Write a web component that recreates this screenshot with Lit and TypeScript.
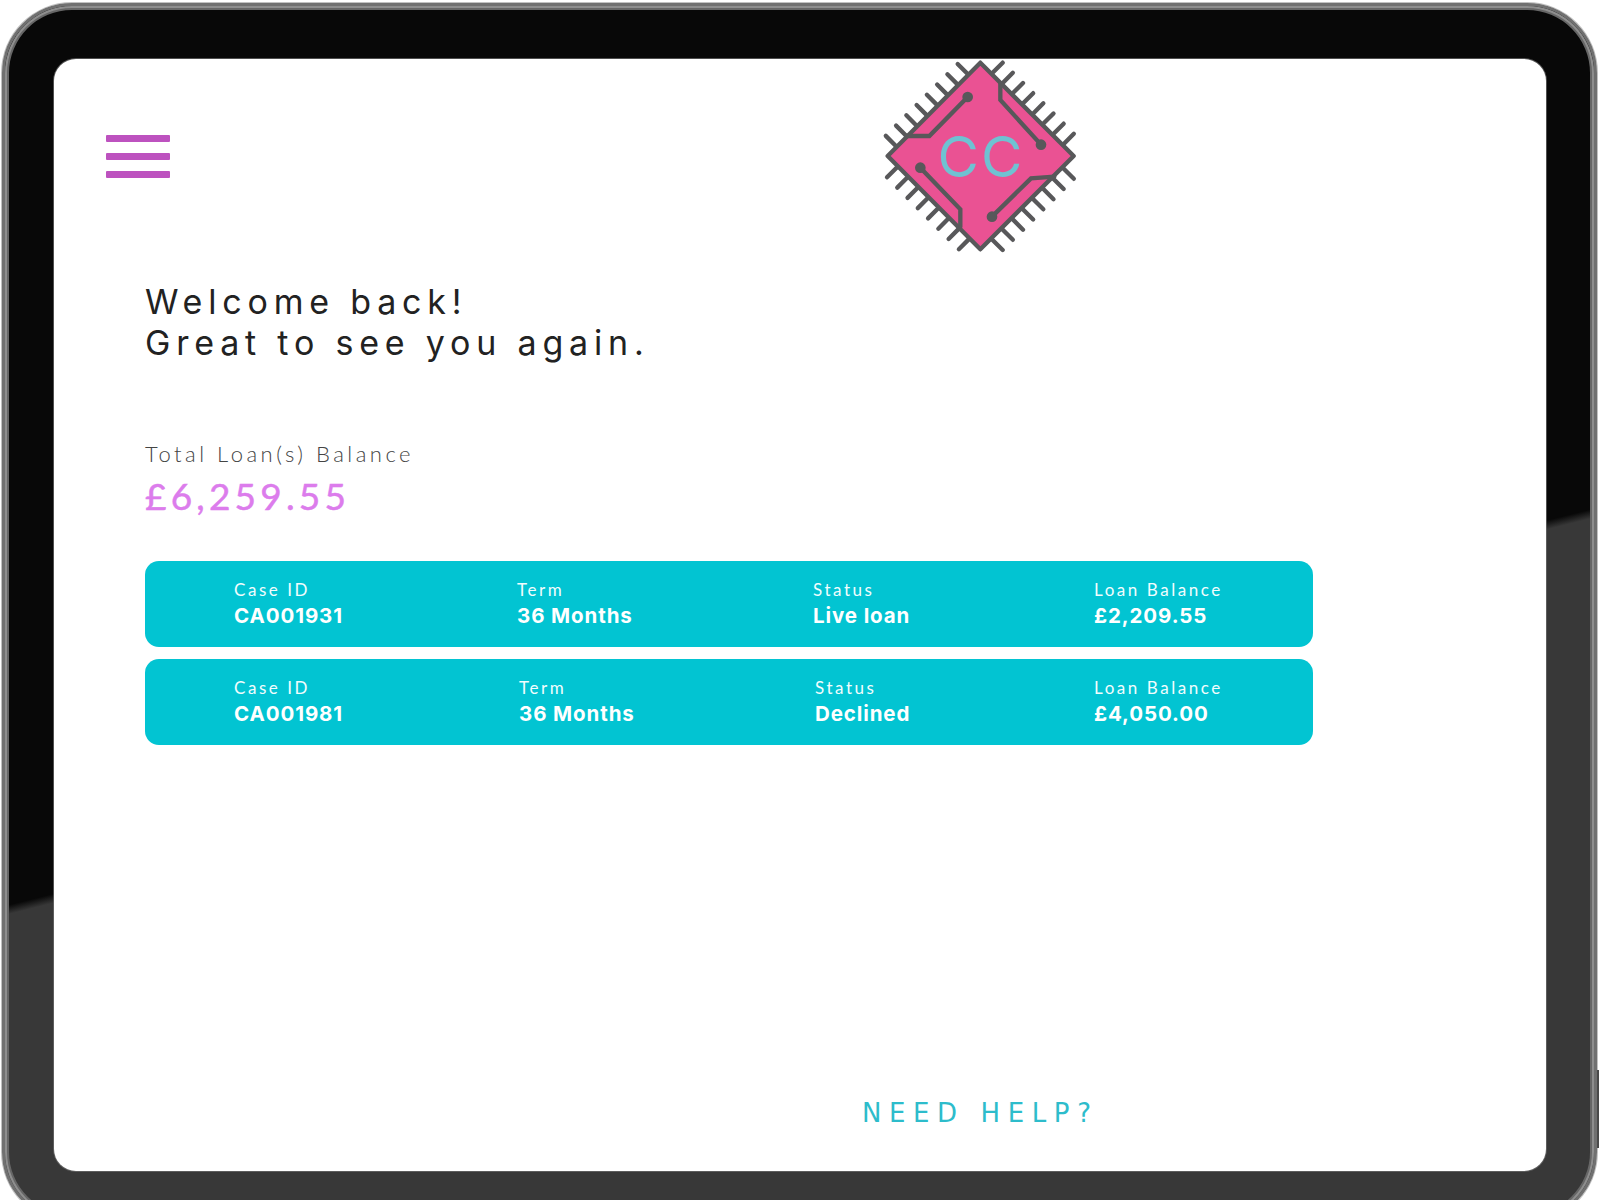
import { LitElement, html, css, svg } from "lit";
import { customElement } from "lit/decorators.js";

type Cell = { label: string; value: string };
const rows: { alt: boolean; cells: Cell[] }[] = [
  { alt: false, cells: [
    { label: "Case ID", value: "CA001931" },
    { label: "Term", value: "36 Months" },
    { label: "Status", value: "Live loan" },
    { label: "Loan Balance", value: "£2,209.55" },
  ]},
  { alt: true, cells: [
    { label: "Case ID", value: "CA001981" },
    { label: "Term", value: "36 Months" },
    { label: "Status", value: "Declined" },
    { label: "Loan Balance", value: "£4,050.00" },
  ]},
];

// pin outer ends and their inward direction, in logo coordinates
const pinSets: [number, number, number, number, number, number][] = [
  [290, 42, -30.8, 30.8, 34, 34],
  [425, 38, 30.5, 30.5, -34, 34],
  [78, 382, 30.8, 30.8, 34, -34],
  [425, 600, 30.5, -30.5, -34, -34],
];

@customElement("app-root")
export class AppRoot extends LitElement {
  static styles = css`
    :host {
      display: block;
      height: 1200px;
      overflow: hidden;
      background: #fff;
      position: relative;
    }
    .device {
      box-sizing: border-box;
      width: 1595px;
      height: 1219px;
      margin: 3px 0 0 2px;
      padding: 53px 48px 48px 49px;
      border: 3px solid #707070;
      border-radius: 70px;
      background: linear-gradient(165.96deg, #080808 873px, #383838 882px);
      box-shadow: inset 0 0 0 2px #8e8e8e, inset 0 0 0 4px #666, 0 0 0 1px rgba(100, 100, 100, 0.4);
    }
    .volume {
      position: absolute;
      left: 1597px;
      top: 1070px;
      width: 2px;
      height: 78px;
      background: #4a4a4a;
    }
    .screen {
      box-sizing: border-box;
      width: 1492px;
      height: 1112px;
      background: #fff;
      border-radius: 22px;
      box-shadow: 0 0 0 1px rgba(110, 110, 110, 0.7);
      display: flex;
      flex-direction: column;
    }
    .header {
      display: flex;
      align-items: flex-start;
      gap: 711px;
      padding: 1px 0 0 52px;
    }
    .burger {
      display: flex;
      flex-direction: column;
      gap: 11px;
      width: 64px;
      margin-top: 75px;
    }
    .burger span {
      display: block;
      height: 7px;
      background: #bd52bf;
      border-radius: 1px;
    }
    .logo {
      display: block;
      width: 200px;
      height: 193.33px;
    }
    .logo-text {
      font-family: Inter, "Liberation Sans", sans-serif;
      font-weight: 400;
      font-size: 170px;
      letter-spacing: 6px;
      fill: #6fc2d2;
    }
    .content {
      padding-left: 91px;
      flex: 1;
      display: flex;
      flex-direction: column;
    }
    h1 {
      margin: 28px 0 0;
      font-family: Inter, sans-serif;
      font-weight: 400;
      font-size: 34px;
      line-height: 41px;
      letter-spacing: 5.8px;
      color: #222;
    }
    .total-label {
      margin-top: 78px;
      font-family: Lato, sans-serif;
      font-weight: 300;
      font-size: 22px;
      line-height: 26px;
      letter-spacing: 3.5px;
      color: #444;
    }
    .total {
      margin-top: 7px;
      font-family: Lato, sans-serif;
      font-weight: 400;
      font-size: 37px;
      line-height: 44px;
      letter-spacing: 4.2px;
      color: #dc7cec;
      -webkit-text-stroke: 0.5px #dc7cec;
    }
    .cards {
      margin-top: 43px;
      width: 1168px;
      display: flex;
      flex-direction: column;
      gap: 12px;
    }
    .card {
      box-sizing: border-box;
      height: 86px;
      padding: 19px 0 0 89px;
      border-radius: 14px;
      background: #02c4d2;
      color: #f2fdfe;
      display: grid;
      grid-template-columns: 283px 296px 281px 1fr;
    }
    .card.alt {
      grid-template-columns: 285px 296px 279px 1fr;
    }
    .label {
      font-family: Lato, sans-serif;
      font-size: 17px;
      line-height: 20px;
      letter-spacing: 2.55px;
    }
    .value {
      margin-top: 3px;
      font-family: Inter, sans-serif;
      font-weight: 700;
      font-size: 20.5px;
      line-height: 26px;
      letter-spacing: 0.9px;
      color: #fff;
    }
    .help {
      margin: auto 0 42px 717px;
      font-family: "DejaVu Sans", sans-serif;
      font-weight: 400;
      font-size: 26px;
      line-height: 32px;
      letter-spacing: 7.6px;
      color: #2dbccb;
      white-space: nowrap;
    }
  `;

  private pins() {
    return pinSets.flatMap(([x, y, sx, sy, dx, dy]) =>
      Array.from({ length: 8 }, (_, i) => {
        const px = x + sx * i;
        const py = y + sy * i;
        return svg`<line x1=${px} y1=${py} x2=${px + dx} y2=${py + dy}></line>`;
      })
    );
  }

  private logo() {
    return html`<svg class="logo" viewBox="60 30 600 580" role="img" aria-label="CC logo">
      <g stroke="#58585a" stroke-width="13" stroke-linecap="round" fill="none">
        ${this.pins()}
        <polygon points="358,38 638,318 358,598 80,318" fill="#ea5293" stroke-linejoin="round"></polygon>
        <polyline points="320,141 205,258 135,258"></polyline>
        <polyline points="418,100 418,150 540,284"></polyline>
        <polyline points="178,353 298,478 298,530"></polyline>
        <polyline points="393,500 510,385 580,380"></polyline>
      </g>
      <g fill="#58585a">
        <circle cx="320" cy="141" r="16"></circle>
        <circle cx="540" cy="284" r="16"></circle>
        <circle cx="178" cy="353" r="16"></circle>
        <circle cx="393" cy="500" r="16"></circle>
      </g>
      <text class="logo-text" x="360" y="382" text-anchor="middle">CC</text>
    </svg>`;
  }

  render() {
    return html`
      <div class="device">
        <div class="screen">
          <div class="header">
            <div class="burger"><span></span><span></span><span></span></div>
            ${this.logo()}
          </div>
          <div class="content">
            <h1>Welcome back!<br />Great to see you again.</h1>
            <div class="total-label">Total Loan(s) Balance</div>
            <div class="total">£6,259.55</div>
            <div class="cards">
              ${rows.map(
                (r) => html`<div class="card ${r.alt ? "alt" : ""}">
                  ${r.cells.map(
                    (c) => html`<div>
                      <div class="label">${c.label}</div>
                      <div class="value">${c.value}</div>
                    </div>`
                  )}
                </div>`
              )}
            </div>
            <div class="help">NEED HELP?</div>
          </div>
        </div>
      </div>
      <div class="volume"></div>
    `;
  }
}
